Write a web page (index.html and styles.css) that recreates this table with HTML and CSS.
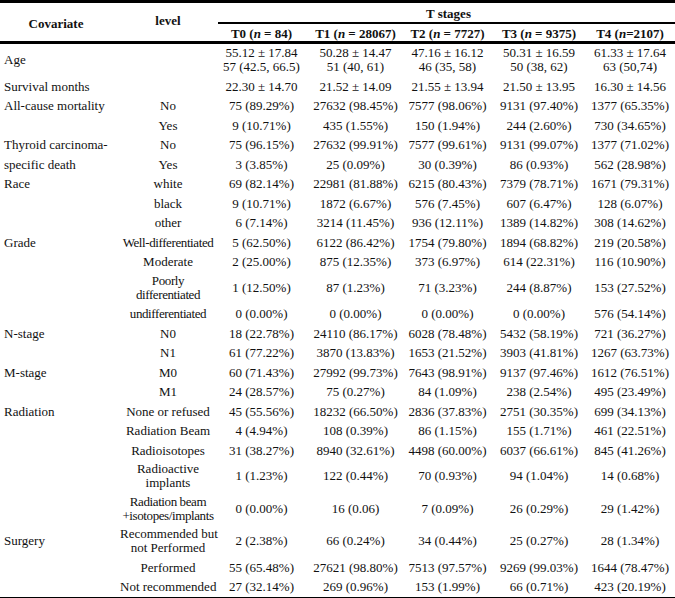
FILE: index.html
```html
<!DOCTYPE html>
<html>
<head>
<meta charset="utf-8">
<link rel="stylesheet" href="styles.css">
</head>
<body>
<table class="tbl">
<colgroup>
<col class="c-cov"><col class="c-lvl"><col class="c-t0"><col class="c-t1"><col class="c-t2"><col class="c-t3"><col class="c-t4">
</colgroup>
<thead>
<tr class="h1">
<th rowspan="2" class="hcov">Covariate</th>
<th rowspan="2" class="hlvl">level</th>
<th colspan="5" class="stages">T stages</th>
</tr>
<tr class="h2">
<th>T0 (<i>n</i> = 84)</th>
<th class="t1">T1 (<i>n</i> = 28067)</th>
<th>T2 (<i>n</i> = 7727)</th>
<th>T3 (<i>n</i> = 9375)</th>
<th>T4 (<i>n</i>=2107)</th>
</tr>
</thead>
<tbody>
<tr class="dbl"><td class="cov">Age</td><td></td><td>55.12 ± 17.84<br>57 (42.5, 66.5)</td><td class="t1">50.28 ± 14.47<br>51 (40, 61)</td><td>47.16 ± 16.12<br>46 (35, 58)</td><td>50.31 ± 16.59<br>50 (38, 62)</td><td>61.33 ± 17.64<br>63 (50,74)</td></tr>
<tr><td class="cov">Survival months</td><td></td><td>22.30 ± 14.70</td><td class="t1">21.52 ± 14.09</td><td>21.55 ± 13.94</td><td>21.50 ± 13.95</td><td>16.30 ± 14.56</td></tr>
<tr><td class="cov">All-cause mortality</td><td>No</td><td>75 (89.29%)</td><td class="t1">27632 (98.45%)</td><td>7577 (98.06%)</td><td>9131 (97.40%)</td><td>1377 (65.35%)</td></tr>
<tr><td class="cov"></td><td>Yes</td><td>9 (10.71%)</td><td class="t1">435 (1.55%)</td><td>150 (1.94%)</td><td>244 (2.60%)</td><td>730 (34.65%)</td></tr>
<tr><td class="cov">Thyroid carcinoma-</td><td>No</td><td>75 (96.15%)</td><td class="t1">27632 (99.91%)</td><td>7577 (99.61%)</td><td>9131 (99.07%)</td><td>1377 (71.02%)</td></tr>
<tr><td class="cov">specific death</td><td>Yes</td><td>3 (3.85%)</td><td class="t1">25 (0.09%)</td><td>30 (0.39%)</td><td>86 (0.93%)</td><td>562 (28.98%)</td></tr>
<tr><td class="cov">Race</td><td>white</td><td>69 (82.14%)</td><td class="t1">22981 (81.88%)</td><td>6215 (80.43%)</td><td>7379 (78.71%)</td><td>1671 (79.31%)</td></tr>
<tr><td class="cov"></td><td>black</td><td>9 (10.71%)</td><td class="t1">1872 (6.67%)</td><td>576 (7.45%)</td><td>607 (6.47%)</td><td>128 (6.07%)</td></tr>
<tr><td class="cov"></td><td>other</td><td>6 (7.14%)</td><td class="t1">3214 (11.45%)</td><td>936 (12.11%)</td><td>1389 (14.82%)</td><td>308 (14.62%)</td></tr>
<tr><td class="cov">Grade</td><td class="narrow">Well-differentiated</td><td>5 (62.50%)</td><td class="t1">6122 (86.42%)</td><td>1754 (79.80%)</td><td>1894 (68.82%)</td><td>219 (20.58%)</td></tr>
<tr><td class="cov"></td><td>Moderate</td><td>2 (25.00%)</td><td class="t1">875 (12.35%)</td><td>373 (6.97%)</td><td>614 (22.31%)</td><td>116 (10.90%)</td></tr>
<tr class="dbl"><td class="cov"></td><td class="narrow">Poorly<br>differentiated</td><td>1 (12.50%)</td><td class="t1">87 (1.23%)</td><td>71 (3.23%)</td><td>244 (8.87%)</td><td>153 (27.52%)</td></tr>
<tr><td class="cov"></td><td class="narrow">undifferentiated</td><td>0 (0.00%)</td><td class="t1">0 (0.00%)</td><td>0 (0.00%)</td><td>0 (0.00%)</td><td>576 (54.14%)</td></tr>
<tr><td class="cov">N-stage</td><td>N0</td><td>18 (22.78%)</td><td class="t1">24110 (86.17%)</td><td>6028 (78.48%)</td><td>5432 (58.19%)</td><td>721 (36.27%)</td></tr>
<tr><td class="cov"></td><td>N1</td><td>61 (77.22%)</td><td class="t1">3870 (13.83%)</td><td>1653 (21.52%)</td><td>3903 (41.81%)</td><td>1267 (63.73%)</td></tr>
<tr><td class="cov">M-stage</td><td>M0</td><td>60 (71.43%)</td><td class="t1">27992 (99.73%)</td><td>7643 (98.91%)</td><td>9137 (97.46%)</td><td>1612 (76.51%)</td></tr>
<tr><td class="cov"></td><td>M1</td><td>24 (28.57%)</td><td class="t1">75 (0.27%)</td><td>84 (1.09%)</td><td>238 (2.54%)</td><td>495 (23.49%)</td></tr>
<tr><td class="cov">Radiation</td><td>None or refused</td><td>45 (55.56%)</td><td class="t1">18232 (66.50%)</td><td>2836 (37.83%)</td><td>2751 (30.35%)</td><td>699 (34.13%)</td></tr>
<tr><td class="cov"></td><td>Radiation Beam</td><td>4 (4.94%)</td><td class="t1">108 (0.39%)</td><td>86 (1.15%)</td><td>155 (1.71%)</td><td>461 (22.51%)</td></tr>
<tr><td class="cov"></td><td>Radioisotopes</td><td>31 (38.27%)</td><td class="t1">8940 (32.61%)</td><td>4498 (60.00%)</td><td>6037 (66.61%)</td><td>845 (41.26%)</td></tr>
<tr class="dbl"><td class="cov"></td><td>Radioactive<br>implants</td><td>1 (1.23%)</td><td class="t1">122 (0.44%)</td><td>70 (0.93%)</td><td>94 (1.04%)</td><td>14 (0.68%)</td></tr>
<tr class="dbl"><td class="cov"></td><td class="narrow">Radiation beam<br>+isotopes/implants</td><td>0 (0.00%)</td><td class="t1">16 (0.06)</td><td>7 (0.09%)</td><td>26 (0.29%)</td><td>29 (1.42%)</td></tr>
<tr class="dbl"><td class="cov">Surgery</td><td>Recommended but<br>not Performed</td><td>2 (2.38%)</td><td class="t1">66 (0.24%)</td><td>34 (0.44%)</td><td>25 (0.27%)</td><td>28 (1.34%)</td></tr>
<tr><td class="cov"></td><td>Performed</td><td>55 (65.48%)</td><td class="t1">27621 (98.80%)</td><td>7513 (97.57%)</td><td>9269 (99.03%)</td><td>1644 (78.47%)</td></tr>
<tr class="last"><td class="cov"></td><td>Not recommended</td><td>27 (32.14%)</td><td class="t1">269 (0.96%)</td><td>153 (1.99%)</td><td>66 (0.71%)</td><td>423 (20.19%)</td></tr>
</tbody>
</table>
</body>
</html>
```
FILE: styles.css
```css
html, body {
  margin: 0;
  padding: 0;
  background: #fff;
}
body {
  font-family: "Liberation Serif", "Times New Roman", serif;
  font-size: 13px;
  color: #111;
}
.tbl {
  width: 675px;
  border-collapse: collapse;
  table-layout: fixed;
}
.c-cov { width: 118px; }
.c-lvl { width: 100px; }
.c-t0 { width: 87px; }
.c-t1 { width: 97px; }
.c-t2 { width: 91px; }
.c-t3 { width: 92px; }
.c-t4 { width: 90px; }

.tbl th {
  font-weight: bold;
  text-align: center;
  vertical-align: middle;
  line-height: 15px;
  padding: 3px 2px 1px;
}
.tbl .h1 th {
  border-top: 3px solid #000;
}
.tbl .stages {
  border-bottom: 2px solid #000;
  padding-left: 6px;
}
.tbl .h2 th {
  padding-top: 2px;
  padding-bottom: 0;
  border-bottom: 3px solid #000;
}
.tbl .hcov {
  border-bottom: 3px solid #000;
  padding-right: 8px;
}
.tbl .hlvl {
  border-bottom: 3px solid #000;
  padding-bottom: 6px;
}
.tbl .t1 {
  padding-left: 6px;
}
.tbl td {
  text-align: center;
  vertical-align: middle;
  line-height: 13px;
  padding: 3.25px 2px;
  white-space: nowrap;
}
.tbl .dbl td {
  line-height: 14px;
  padding-top: 2.25px;
  padding-bottom: 2.25px;
}
.tbl td.cov {
  text-align: left;
  padding-left: 4px;
}
.tbl .narrow {
  letter-spacing: -0.4px;
}
.tbl .last td {
  border-bottom: 3px solid #000;
}
```
